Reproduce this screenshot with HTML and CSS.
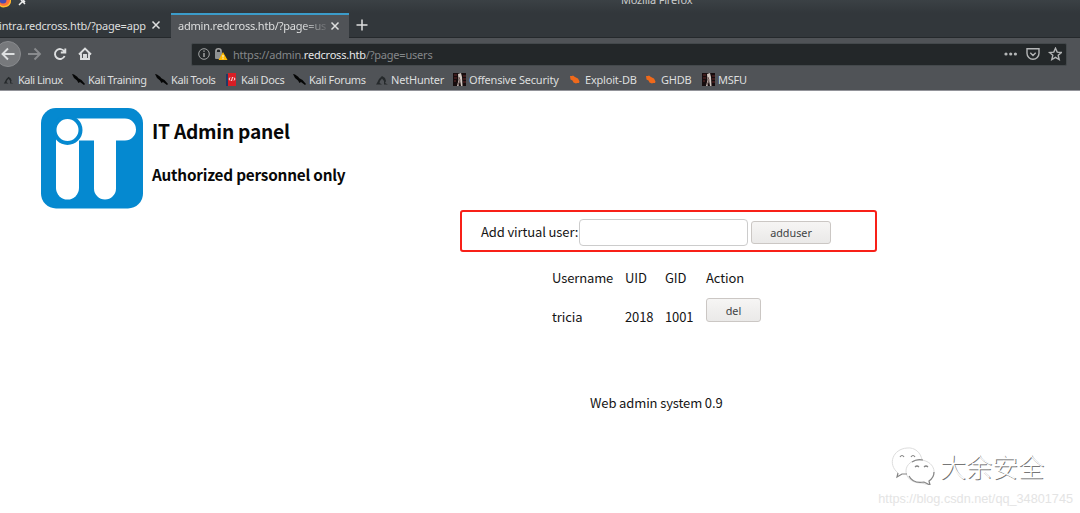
FILE: index.html
```html
<!DOCTYPE html>
<html lang="en">
<head>
<meta charset="utf-8">
<title>Mozilla Firefox</title>
<link rel="stylesheet" href="styles.css">
</head>
<body>
<svg class="symbols" aria-hidden="true">
  <symbol id="dragon" viewBox="0 0 14 14"><path d="M2 10l2-4 3-3 3 2 1 3-1 2 3 1.500H9L9 8 7 5.500 5 8 4.500 10 7 11.500H1z" fill="#25292b"/></symbol>
  <symbol id="blade" viewBox="0 0 14 14"><path d="M0 1l2 .5L5.500 4l.5 1 3.500 2L13 11l-1 1-4-3-1.500 1L5 7.500 2 5z" fill="#050606"/></symbol>
  <symbol id="docs" viewBox="0 0 14 14"><path d="M1 1h2v12H1z" fill="#203a66"/><path d="M3 0h8v13H3z" fill="#d91e25"/><path d="M5 4.500L4 6l1 1.500M7.500 4l-1 4M9 4.500l1 1.500-1 1.500" fill="none" stroke="#fff" stroke-width=".9"/></symbol>
  <symbol id="offsec" viewBox="0 0 14 14"><path d="M0 0h13v13H0z" fill="#160c0d"/><path d="M1 2h3M1 5h3M1 8h2M10 3h3M10 6h3M10 9h3" stroke="#64282a"/><path d="M5 1l3-1 1 4 .5 9H8L7 7l-1.500 6H4l1.500-6z" fill="#d0c5bf"/><path d="M6 4l1 3-2 5" fill="none" stroke="#6b5553"/></symbol>
  <symbol id="exploit" viewBox="0 0 14 14"><path d="M1 3l2 0 1-.5 2 1.500 3 1.500 1.500 3-.5 1.500-2 0-1 .5-2.500-1-1-2-2-1z" fill="#ef691b"/></symbol>
</svg>
<header class="browser">
  <div class="titlebar">
    <svg class="firefox" width="12" height="8" viewBox="0 0 12 8"><circle cx="4" cy="0" r="7" fill="#ff7139"/><path d="M-2 0a6 6 0 0 0 12 0l1 0a7 7 0 0 1-13 4z" fill="#ffbf2c"/><circle cx="3" cy="0" r="3.500" fill="#4a4baf"/></svg>
    <svg class="pin" width="9" height="6" viewBox="0 0 9 6"><path d="M1 5l3-3M3 0l4 4M5 0l2 2" stroke="#eee" stroke-width="1.500"/></svg>
    <span class="window-title">Mozilla Firefox</span>
  </div>
  <div class="tabs">
    <div class="tab first"><span class="tab-label">intra.redcross.htb/?page=app</span><svg class="close" width="10" height="10" viewBox="0 0 10 10"><path d="M1.500 1.500l7 7m0-7l-7 7"/></svg></div>
    <div class="tab active"><span class="tab-label fade">admin.redcross.htb/?page=us</span><svg class="close" width="10" height="10" viewBox="0 0 10 10"><path d="M1.500 1.500l7 7m0-7l-7 7"/></svg></div>
    <svg class="plus" width="12" height="12" viewBox="0 0 12 12"><path d="M6 .5v11M.5 6h11"/></svg>
  </div>
  <nav class="toolbar">
    <svg class="controls" width="100" height="28" viewBox="0 0 100 28">
      <circle cx="8" cy="14" r="12.500" fill="#77797c" stroke="#898b8e"/>
      <path d="M14.500 14H2.500m5.500-5.500L2.500 14 8 19.500" class="line"/>
      <path d="M28 14h12m-5.500-5.500L40 14l-5.500 5.500" class="line dim"/>
      <path d="M64.300 11.500a5 5 0 1 0 .3 4.500M65.300 8.500v4h-4.500" class="line"/>
      <path d="M79 14.500l6-6 6 6M81 13.500V19h8v-5.500M84 19v-4h2v4" class="line"/>
    </svg>
    <div class="address">
      <svg width="30" height="14" viewBox="0 0 30 14"><circle cx="6" cy="7" r="5.300" fill="none" stroke="#a1a3a4"/><path d="M6 6v4M6 3.500v1.200" stroke="#b3b4b5" stroke-width="1.300"/><path d="M18 6V4c0-3 5-3 5 0v2" fill="none" stroke="#a2a2a2" stroke-width="1.700"/><rect x="17" y="5" width="7" height="7" rx="1" fill="#8f9293"/><path d="M25 5l4.500 8h-9z" fill="#ffb900"/><path d="M25 8v2.500m0 .7v1" stroke="#fff"/></svg>
      <span class="url">https://admin.<b>redcross.htb</b>/?page=users</span>
      <svg class="page-actions" width="58" height="14" viewBox="0 0 58 14"><g fill="#b4b6b7"><circle cx="2" cy="7" r="1.600"/><circle cx="6.700" cy="7" r="1.600"/><circle cx="11.400" cy="7" r="1.600"/></g><g fill="none" stroke="#b4b6b7" stroke-width="1.400"><path d="M23 1.800h12v4.500a6 6 0 0 1-12 0zM26.300 5.800L29 8.500l2.700-2.700"/><path d="M51.500 1.200l1.700 3.900 4.200.4-3.200 2.800 1 4.200-3.700-2.200-3.700 2.200 1-4.200-3.200-2.800 4.200-.4z"/></g></svg>
    </div>
  </nav>
  <nav class="bookmarks">
    <span class="bookmark lead"><svg><use href="#dragon"/></svg>Kali Linux</span>
    <span class="bookmark tight"><svg><use href="#blade"/></svg>Kali Training</span>
    <span class="bookmark tight"><svg><use href="#blade"/></svg>Kali Tools</span>
    <span class="bookmark tight"><svg><use href="#docs"/></svg>Kali Docs</span>
    <span class="bookmark tight"><svg><use href="#blade"/></svg>Kali Forums</span>
    <span class="bookmark"><svg><use href="#dragon"/></svg>NetHunter</span>
    <span class="bookmark"><svg><use href="#offsec"/></svg>Offensive Security</span>
    <span class="bookmark"><svg><use href="#exploit"/></svg>Exploit-DB</span>
    <span class="bookmark"><svg><use href="#exploit"/></svg>GHDB</span>
    <span class="bookmark"><svg><use href="#offsec"/></svg>MSFU</span>
  </nav>
</header>
<main class="page">
  <section class="brand">
    <svg width="102" height="101" viewBox="0 0 102 101"><rect width="102" height="100.500" rx="15" fill="#0589d0"/><path d="M15 31h23v49a11.500 11.500 0 0 1-23 0z" fill="#fff"/><path d="M35 10.500h49a11 11 0 0 1 0 22h-9v48a11 11 0 0 1-22 0v-48H35z" fill="#fff"/><circle cx="26.500" cy="22" r="13" fill="#fff" stroke="#0589d0" stroke-width="4"/></svg>
    <div><h1>IT Admin panel</h1><h2>Authorized personnel only</h2></div>
  </section>
  <form class="add-user">
    <label for="user">Add virtual user:</label><input id="user" type="text"><button class="button" type="button">adduser</button>
  </form>
  <div class="users">
    <span>Username</span><span>UID</span><span>GID</span><span>Action</span>
    <span>tricia</span><span>2018</span><span>1001</span><button class="button del" type="button">del</button>
  </div>
  <footer class="version">Web admin system 0.9</footer>
</main>
<aside class="watermark">
  <div class="account">
    <svg width="44" height="38" viewBox="0 0 44 38"><g fill="none" stroke="#ddd"><path d="M7 26C-4 17 2 2 16 1c8-1 14 5 15 12"/><path d="M30 13c-20-1-20 23 0 23l9 2-1-4c10-8 4-20-8-21z"/></g><g fill="none" stroke="#858585" stroke-width="1.200"><path d="M7 26l-1 4 5-3h5M9 10q2-3 4 0M20 10q2-3 4 0M24 20q2-2 4 0M33 20q2-2 4 0M18 29c3 6 9 7 15 6l6 3-1-4c3-2 5-5 5-9M21 15c4-3 7-3 11-2"/></g></svg>
    <span>大余安全</span>
  </div>
  <div class="source">https://blog.csdn.net/qq_34801745</div>
</aside>
</body>
</html>
```
FILE: styles.css
```css
* { box-sizing: border-box; }
body { margin: 0; width: 1080px; height: 513px; overflow: hidden; background: #fff; font-family: "Noto Sans CJK SC", sans-serif; position: relative; }
.symbols { display: none; }
.browser { height: 91px; background: #505357; border-bottom: 1px solid #929399; font-family: "Noto Sans", sans-serif; color: #dedfdf; font-size: 11px; letter-spacing: -.2px; }
.titlebar { height: 13px; background: linear-gradient(#3b4145, #32373b); display: flex; align-items: flex-start; }
.pin { margin-left: 6px; }
.window-title { margin-left: 594px; margin-top: -8px; line-height: 16px; white-space: nowrap; color: #c9cbcc; }
.tabs { height: 25px; background: #32373b; border-bottom: 1px solid #25292c; display: flex; align-items: center; }
.tab { height: 25px; display: flex; align-items: center; }
.first { width: 171px; }
.active { width: 178px; height: 25px; margin-bottom: -1px; padding-left: 7px; background: #505357; border-top: 2px solid #3b9cca; }
.tab-label { width: 148px; white-space: nowrap; line-height: 20px; padding-top: 1px; }
.active .tab-label { padding-top: 0; margin-top: -2px; }
.first .tab-label { width: 151px; margin-left: -1px; }
.fade { -webkit-mask-image: linear-gradient(90deg, #000 122px, transparent 153px); mask-image: linear-gradient(90deg, #000 122px, transparent 153px); }
.close, .plus { fill: none; stroke: #dedfdf; stroke-width: 1.5; flex: none; }
.close { margin-left: 4px; margin-bottom: 1px; }
.first .close { margin-left: 1px; margin-bottom: 0; }
.plus { margin-left: 7px; }
.toolbar { height: 32px; display: flex; align-items: center; }
.line { fill: none; stroke: #dddfe0; stroke-width: 1.9; }
.dim { stroke: #898b8e; }
.controls { margin-bottom: 1px; }
.address { margin-left: 91px; width: 876px; height: 23px; border: 1px solid #44494c; border-radius: 2px; background: #232729; display: flex; align-items: center; padding: 0 4px 0 6px; }
.url { margin-left: 5px; color: #85888a; letter-spacing: -.21px; }
.url b { font-weight: 400; color: #e7e8e8; }
.page-actions { margin-left: auto; }
.bookmarks { height: 20px; display: grid; grid-template-columns: 69px 83px 70px 68px 82px 78px 116px 76px 57px 50px; padding-left: 3px; align-items: center; }
.bookmark { display: flex; align-items: center; white-space: nowrap; line-height: 18px; }
.bookmark svg { width: 14px; height: 14px; margin-right: 2px; flex: none; }
.lead { letter-spacing: -.5px; }
.tight { letter-spacing: -.38px; }
.lead svg { width: 11px; margin-right: 4px; }
.page { color: #151515; font-size: 13px; line-height: 20px; letter-spacing: -.12px; }
.brand { height: 119px; display: flex; padding: 17px 0 0 41px; gap: 9px; }
.brand h1, .brand h2 { margin: 0; color: #080808; font-weight: 700; }
.brand h1 { font-size: 19.2px; line-height: 30px; margin-top: 8px; letter-spacing: -.25px; }
.brand h2 { font-size: 15.3px; line-height: 24px; margin-top: 16px; letter-spacing: -.21px; }
.add-user { width: 417px; height: 42px; margin-left: 460px; border: 2px solid #f82018; border-radius: 3px; display: flex; align-items: center; padding: 2px 0 0 19px; }
.add-user label { width: 98px; white-space: nowrap; }
.add-user input { width: 169px; height: 27px; border: 1px solid #ccc; border-radius: 4px; background: #fff; }
.button { width: 80px; height: 23px; margin: 0 0 0 3px; padding: 0; border: 1px solid #cbc7c4; border-radius: 3px; background: linear-gradient(#f6f5f4, #eae9e8); font: 10.8px "Noto Sans", sans-serif; color: #404344; }
.users { display: grid; width: 210px; margin: 16px 0 0 552px; grid-template-columns: 73px 40px 41px 56px; grid-template-rows: 20px 40px; align-items: center; }
.users > :nth-child(n+5) { margin-top: 18px; }
.users .del { width: 55px; height: 24px; margin: 4px 0 0; }
.version { margin: 65px 0 0 590px; }
.watermark { position: absolute; right: 7px; bottom: 5px; width: 196px; }
.account { display: flex; align-items: center; gap: 5px; margin-left: 14px; height: 38px; }
.account span { font-size: 26px; line-height: 36px; font-weight: 300; color: #fff; text-shadow: 1px 1px 0 #777; white-space: nowrap; }
.source { margin-top: 6px; font: 12.7px/17px "Liberation Sans", sans-serif; color: #e4e4e4; white-space: nowrap; text-align: right; }
```
